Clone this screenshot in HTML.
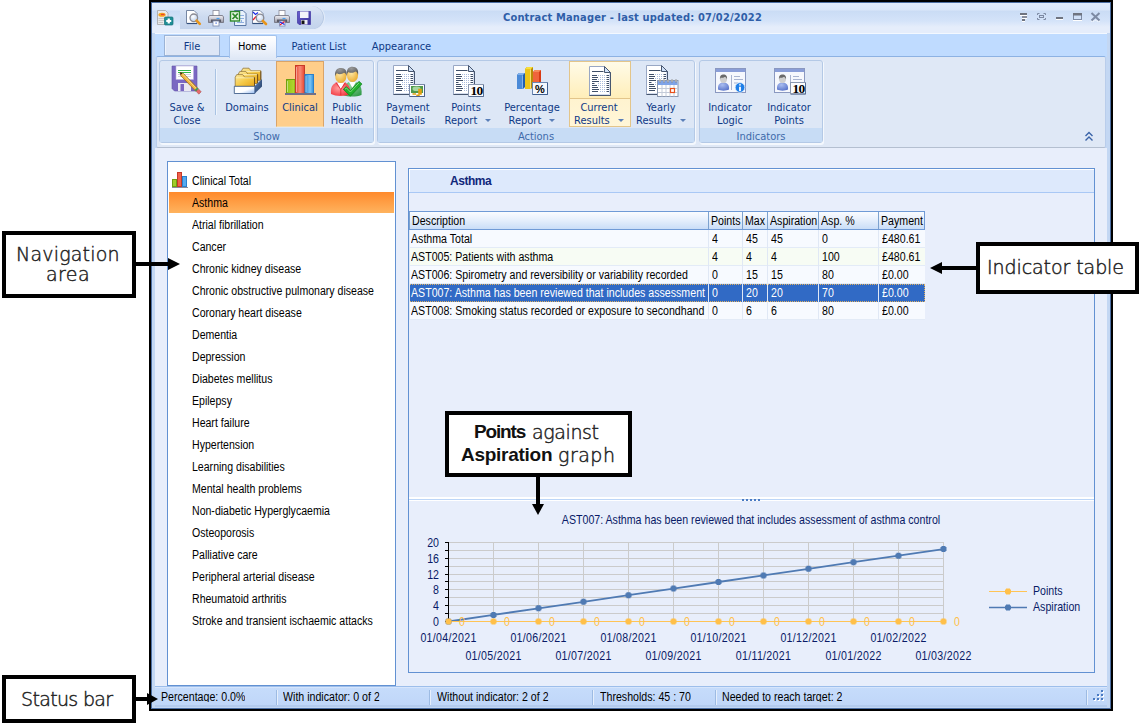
<!DOCTYPE html>
<html lang="en">
<head>
<meta charset="utf-8">
<title>Contract Manager</title>
<style>
html,body{margin:0;padding:0;background:#fff;}
body{width:1140px;height:725px;position:relative;overflow:hidden;font-family:"Liberation Sans",sans-serif;font-size:11px;color:#000;}
.abs{position:absolute;}
#win{position:absolute;left:149px;top:0;width:964px;height:711px;background:#000;}
#frame{position:absolute;left:2px;top:2px;right:2px;bottom:2px;background:#c3d7f3;border:1px solid #4d6fa3;box-sizing:border-box;}
#title{position:absolute;left:152px;top:3px;width:958px;height:30px;background:linear-gradient(#e2ecfb 0,#dbe7f9 7px,#cadcf5 8px,#d4e3f9 18px,#e5edfb 24px,#e5edfb 100%);}
#tabs{position:absolute;left:155px;top:33px;width:952px;height:24px;background:#bfdbff;border-top:1px solid #f3f8ff;box-sizing:border-box;}
#ribbon{position:absolute;left:156px;top:56px;width:950px;height:92px;background:#dfe8f6;border:1px solid #b9cdeb;border-top-color:#8db2e3;border-bottom-color:#b4bfd0;border-radius:2px;box-sizing:border-box;}
#content{position:absolute;left:155px;top:148px;width:952px;height:538px;background:#e8eefb;}
.tahoma{font-family:"DejaVu Sans Condensed","Liberation Sans",sans-serif;font-size:11px;color:#0e3986;}
.tab{position:absolute;top:36px;height:21px;line-height:21px;text-align:center;}
.grp{position:absolute;top:60px;height:83px;background:#dde7f6;border:1px solid #b4c9e6;border-radius:3px;box-sizing:border-box;box-shadow:1px 1px 0 #f4f8fd,1px 2px 0 #f4f8fd;}
.grp .lab{position:absolute;left:0;right:0;bottom:0;height:14px;line-height:17px;background:#c7dcf5;text-align:center;color:#3e6aaa;}
.btn{position:absolute;top:101px;line-height:13px;text-align:center;white-space:nowrap;}
.callout{position:absolute;border:4px solid #000;background:#fff;box-sizing:border-box;}
.ct{position:absolute;height:22px;line-height:22px;white-space:nowrap;font-family:"DejaVu Sans","Liberation Sans",sans-serif;font-weight:200;font-size:19px;color:#222;-webkit-text-stroke:0.45px #222;}
.ct.cb{font-family:"Liberation Sans",sans-serif;font-weight:bold;-webkit-text-stroke:0;color:#111;}
.nav{position:absolute;left:192px;height:22px;line-height:22px;white-space:nowrap;font-size:12px;transform:scaleX(0.88);transform-origin:0 50%;}
.th{position:absolute;top:212px;height:17px;line-height:19px;padding-left:2px;box-sizing:border-box;border-left:1px solid #7da2ce;white-space:nowrap;overflow:hidden;font-size:12px;}
.tr{position:absolute;left:409px;width:516px;height:18px;background:#f7faff;border-bottom:1px solid #e3ebf7;box-sizing:border-box;}
.tr.alt{background:#f7fcf4;}
.tr.sel{background:#316ac5;border:1px dotted #e0b060;}
.td{position:absolute;height:18px;line-height:19px;padding-left:1px;box-sizing:border-box;border-left:1px solid #e0e8f5;white-space:nowrap;overflow:hidden;font-size:12px;}
.td.w{color:#fff;}
.st{position:absolute;top:688px;height:14px;overflow:hidden;line-height:18px;white-space:nowrap;font-size:12px;transform:scaleX(0.885);transform-origin:0 50%;}
.sep{position:absolute;top:690px;width:1px;height:15px;background:#9dbbe3;border-right:1px solid #e6effc;}
.dd{display:inline-block;width:0;height:0;border-left:3px solid transparent;border-right:3px solid transparent;border-top:3px solid #5a7fb8;margin-left:5px;vertical-align:2px;}
.sx{display:inline-block;transform:scaleX(0.885);transform-origin:0 50%;}
</style>
</head>
<body>
<div id="win"><div id="frame"></div></div>
<div id="title"></div>
<div id="tabs"></div>
<div id="ribbon"></div>
<div id="content"></div>

<!-- title text -->
<div class="abs" style="left:503px;top:10px;width:260px;height:16px;line-height:16px;font-family:'DejaVu Sans Condensed','Liberation Sans',sans-serif;font-weight:bold;font-size:11px;color:#2f5ea8;letter-spacing:0.17px;white-space:nowrap;">Contract Manager - last updated: 07/02/2022</div>

<!-- quick access toolbar + window buttons -->
<div class="abs" style="left:180px;top:5px;width:145px;height:25px;background:linear-gradient(#dfe8f6,#cddbf0 45%,#c3d3ec);border-radius:0 13px 13px 0;border:1px solid #e3ecf9;border-left:none;box-sizing:border-box;box-shadow:inset -1px 0 0 #b4c7e3;"></div>
<svg class="abs" style="left:150px;top:0;" width="962" height="34" viewBox="150 0 962 34">
<defs>
<linearGradient id="gPrn" x1="0" y1="0" x2="0" y2="1"><stop offset="0" stop-color="#f0f0f5"/><stop offset="0.55" stop-color="#c2c2cc"/><stop offset="1" stop-color="#8e8e9a"/></linearGradient>
<radialGradient id="gLens" cx="0.4" cy="0.35" r="0.7"><stop offset="0" stop-color="#ffffff"/><stop offset="1" stop-color="#b9cdea"/></radialGradient>
<linearGradient id="gFlop" x1="0" y1="0" x2="1" y2="1"><stop offset="0" stop-color="#6a5fd0"/><stop offset="1" stop-color="#3a3296"/></linearGradient>
<g id="printer">
<rect x="5" y="0.5" width="6" height="6" fill="#fff" stroke="#8a8a98" stroke-width="0.8"/>
<path d="M1.5 5.500H14.500L15.500 7V12.500H0.500V7Z" fill="url(#gPrn)" stroke="#6d6d7a" stroke-width="0.8"/>
<path d="M3 12V9.500H13V12" fill="#5a5a66"/>
<path d="M8.500 8.500H11.500" stroke="#4aa0f0" stroke-width="1.2"/>
</g>
<g id="mag">
<circle cx="0" cy="0" r="3.800" fill="url(#gLens)" stroke="#8a8a92" stroke-width="1.3"/>
<path d="M2.800 2.800L6 6" stroke="#e8951a" stroke-width="2.600" stroke-linecap="round"/>
</g>
</defs>
<!-- app icon -->
<path d="M157.500 10.500H165.500L168 13V24.500H157.500Z" fill="#e9e9e9" stroke="#a3a3a3" stroke-width="0.8"/>
<ellipse cx="162" cy="14.800" rx="3.600" ry="2" fill="#f7a51a"/>
<path d="M161 14.500h3.500" stroke="#e8452f" stroke-width="1.300"/>
<path d="M158.500 18.500H166M158.500 20.500H166M158.500 22.500H163" stroke="#c3c3c3" stroke-width="0.9"/>
<rect x="164.500" y="17" width="8.500" height="8" rx="1" fill="#1f8f96" stroke="#167078" stroke-width="0.7"/>
<path d="M168.750 18.500V23.500M166.250 21H171.250" stroke="#fff" stroke-width="2.200"/>
<!-- print preview -->
<path d="M186.500 10.500H194L197 13.500V23.500H186.500Z" fill="#fff" stroke="#6a7a98" stroke-width="0.9"/>
<path d="M187 23.500H197" stroke="#33507f" stroke-width="1.200"/>
<use href="#mag" x="193.800" y="17.800"/>
<!-- print -->
<use href="#printer" x="208" y="10"/>
<rect x="213" y="21" width="6" height="5" fill="#fff" stroke="#7a8ab0" stroke-width="0.8"/>
<rect x="215.500" y="22.500" width="1.200" height="1.200" fill="#2a5ad8"/>
<!-- excel -->
<path d="M234.500 10.500H243L246 13.500V25.500H234.500Z" fill="#e9f1fd" stroke="#4a6a9a" stroke-width="0.9"/>
<path d="M240 15.500H244M240 18.500H244M237 22.500H244M241.500 20V23" stroke="#8fb0e0" stroke-width="1"/>
<rect x="230.500" y="11.500" width="9" height="9.500" fill="#eaf5e6" stroke="#2f8a2a" stroke-width="1.400"/>
<path d="M232.500 13.500L237.800 19M237.800 13.500L232.500 19" stroke="#2f8a2a" stroke-width="1.800"/>
<!-- chart preview -->
<path d="M252.500 10.500H260L263 13.500V23.500H252.500Z" fill="#fff" stroke="#6a7a98" stroke-width="0.9"/>
<path d="M252.500 23.500H263" stroke="#33507f" stroke-width="1.200"/>
<path d="M253 12L255.500 14.500L258 12.500" stroke="#1a2ae8" stroke-width="1.200" fill="none"/>
<path d="M253 20L256 16.500" stroke="#e81a2a" stroke-width="1.200" fill="none"/>
<use href="#mag" x="260" y="18"/>
<!-- print chart -->
<use href="#printer" x="274" y="10"/>
<rect x="279.500" y="21" width="5.500" height="5" fill="#fff" stroke="#7a8ab0" stroke-width="0.8"/>
<path d="M280 25L284.500 21.500" stroke="#e81a2a" stroke-width="1.200"/>
<path d="M280 22L284.500 24.500" stroke="#1a2ae8" stroke-width="1.200"/>
<!-- save -->
<path d="M297.500 11.500H310.500V24.500H299L297.500 23Z" fill="url(#gFlop)" stroke="#4a40a8" stroke-width="0.8"/>
<rect x="300" y="11.500" width="8.500" height="6.500" fill="#f4f4fb"/>
<rect x="301" y="20" width="6.500" height="4.500" fill="#eeeef4"/>
<rect x="301.500" y="20.500" width="3" height="3.500" fill="#141414"/>
<!-- window buttons -->
<g fill="#fff">
<rect x="1020" y="14" width="7" height="2"/><rect x="1022" y="17" width="5" height="2"/><rect x="1022" y="20" width="3" height="2"/>
<rect x="1056" y="18" width="7" height="2"/>
<rect x="1073" y="19" width="9" height="2"/>
<path d="M1091 21.500h3l1.500-2 1.500 2h3v-1h-9z"/>
</g>
<g fill="#6f7480">
<rect x="1020" y="13" width="7" height="2"/><rect x="1022" y="16" width="5" height="2" fill="#8a909e"/><rect x="1022" y="19" width="3" height="2"/>
<rect x="1056" y="17" width="7" height="2"/>
</g>
<path d="M1037.500 15V13.500H1039.500M1043.500 13.500H1045.500V15M1045.500 18V19.500H1043.500M1039.500 19.500H1037.500V18" stroke="#7d8aa3" stroke-width="1" fill="none"/>
<rect x="1039.500" y="15.500" width="4" height="2" fill="none" stroke="#7d8aa3"/>
<rect x="1073.500" y="13.500" width="8" height="6" fill="none" stroke="#7d8aa3"/>
<rect x="1073" y="13" width="9" height="2.500" fill="#6f7480"/>
<path d="M1091.500 13L1099.500 20.500M1099.500 13L1091.500 20.500" stroke="#7d8aa3" stroke-width="2" fill="none"/>
</svg>
<!-- ribbon collapse chevron -->
<svg class="abs" style="left:1084px;top:131px;" width="10" height="11" viewBox="0 0 10 11"><path d="M1.500 5L5 1.500L8.500 5M1.500 9.500L5 6L8.500 9.500" stroke="#3a63a8" stroke-width="1.400" fill="none"/></svg>
<!-- ribbon tabs -->
<div class="abs" style="left:164px;top:35px;width:56px;height:21px;background:#dde6f6;border:1px solid #9bb3d6;box-sizing:border-box;box-shadow:inset 1px 1px 0 #eef3fb;"></div>
<div class="abs" style="left:229px;top:35px;width:48px;height:23px;background:linear-gradient(#ffffff,#f4f7fd 40%,#e0e9f7);border:1px solid #a3c2ec;border-bottom:none;border-radius:2px 2px 0 0;box-sizing:border-box;"></div>
<div class="tab tahoma" style="left:164px;width:56px;">File</div>
<div class="tab tahoma" style="left:228px;width:48px;color:#000;letter-spacing:-0.3px;">Home</div>
<div class="tab tahoma" style="left:284px;width:70px;">Patient List</div>
<div class="tab tahoma" style="left:364px;width:75px;">Appearance</div>
<!-- ribbon groups -->
<div class="grp tahoma" style="left:159px;width:215px;"><div class="lab">Show</div></div>
<div class="grp tahoma" style="left:377px;width:318px;"><div class="lab">Actions</div></div>
<div class="grp tahoma" style="left:699px;width:124px;"><div class="lab">Indicators</div></div>
<div class="abs" style="left:215px;top:69px;width:1px;height:46px;background:#a9c3e3;border-right:1px solid #eef4fc;"></div>
<!-- highlighted buttons -->
<div class="abs" style="left:276px;top:61px;width:48px;height:66px;background:#ffce8a;border:1px solid #d9a469;border-bottom-color:#f5dcae;box-sizing:border-box;"></div>
<div class="abs" style="left:569px;top:61px;width:62px;height:66px;background:linear-gradient(#fffbe8 0,#ffeeb9 36px,#fff3cf 37px,#fff6d8 100%);border:1px solid #e3c58a;box-sizing:border-box;"></div>
<div class="abs" style="left:570px;top:98px;width:60px;height:1px;background:#e3c58a;"></div>
<!-- button labels -->
<div class="btn tahoma" style="left:157px;width:60px;">Save &amp;<br>Close</div>
<div class="btn tahoma" style="left:217px;width:60px;">Domains</div>
<div class="btn tahoma" style="left:270px;width:60px;">Clinical</div>
<div class="btn tahoma" style="left:317px;width:60px;">Public<br>Health</div>
<div class="btn tahoma" style="left:373px;width:70px;">Payment<br>Details</div>
<div class="btn tahoma" style="left:433px;width:70px;"><span style="position:relative;left:-2px;">Points</span><br>Report <i class="dd"></i></div>
<div class="btn tahoma" style="left:497px;width:70px;">Percentage<br>Report <i class="dd"></i></div>
<div class="btn tahoma" style="left:564px;width:70px;">Current<br>Results <i class="dd"></i></div>
<div class="btn tahoma" style="left:626px;width:70px;">Yearly<br>Results <i class="dd"></i></div>
<div class="btn tahoma" style="left:695px;width:70px;">Indicator<br>Logic</div>
<div class="btn tahoma" style="left:754px;width:70px;">Indicator<br>Points</div>
<!-- ribbon icons -->
<svg class="abs" style="left:0;top:0;" width="1140" height="150" viewBox="0 0 1140 150">
<defs>
<g id="doc">
<path d="M0.5 0.5H15.5L21.5 6.5V29.5H0.5Z" fill="#fff" stroke="#98a7c4"/>
<path d="M1.5 28.500H20.500V7" fill="none" stroke="#d3dcee"/>
<path d="M0.500 29.500H21.500V6.500" fill="none" stroke="#46566f"/>
<path d="M15.500 0.500V6.500H21.500Z" fill="#cfe0f8" stroke="#46566f" stroke-linejoin="round"/>
<path d="M3 5.500h11.500 M3 9.5h5 M17.5 9.5h2.5 M3 11.5h6 M17.5 11.5h2.5 M3 13.5h5 M17.5 13.5h2.5 M3 15.5h7 M17.5 15.5h2.5 M3 17.5h2.5 M17.5 17.5h2.5 M3 19.5h5 M17.5 19.5h2.5 M3 21.5h6 M17.5 21.5h2.5 M3 23.5h7 M17.5 23.5h2.5 M3 25.5h6 M17.5 25.5h2.5" stroke="#3f4f68" stroke-width="1" fill="none"/>
<path d="M9.0 9.5h1 M11.0 9.5h1 M13.0 9.5h1 M15.0 9.5h1 M11.0 11.5h1 M13.0 11.5h1 M15.0 11.5h1 M9.0 13.5h1 M11.0 13.5h1 M13.0 13.5h1 M15.0 13.5h1 M11.0 15.5h1 M13.0 15.5h1 M15.0 15.5h1 M9.0 17.5h1 M11.0 17.5h1 M13.0 17.5h1 M15.0 17.5h1 M9.0 19.5h1 M11.0 19.5h1 M13.0 19.5h1 M15.0 19.5h1 M11.0 21.5h1 M13.0 21.5h1 M15.0 21.5h1 M11.0 23.5h1 M13.0 23.5h1 M15.0 23.5h1 M11.0 25.5h1 M13.0 25.5h1 M15.0 25.5h1" stroke="#a9bbdc" stroke-width="1" fill="none"/>
</g>
<linearGradient id="gGreen" x1="0" x2="1"><stop offset="0" stop-color="#8fc31a"/><stop offset="1" stop-color="#b6d930"/></linearGradient>
<linearGradient id="gRed" x1="0" x2="1"><stop offset="0" stop-color="#e8452f"/><stop offset="0.5" stop-color="#f58a78"/><stop offset="1" stop-color="#e8452f"/></linearGradient>
<linearGradient id="gBlue" x1="0" x2="1"><stop offset="0" stop-color="#2f8fdc"/><stop offset="0.6" stop-color="#7cc4f4"/><stop offset="1" stop-color="#2f8fdc"/></linearGradient>
<linearGradient id="gFold" x1="0" y1="0" x2="1" y2="1"><stop offset="0" stop-color="#fbe9a0"/><stop offset="0.5" stop-color="#f6cb4a"/><stop offset="1" stop-color="#e6a416"/></linearGradient><linearGradient id="gTraySide" x1="0" y1="0" x2="1" y2="1"><stop offset="0" stop-color="#5f80b6"/><stop offset="1" stop-color="#1f3a60"/></linearGradient>
<linearGradient id="gTray" x1="0" y1="0" x2="1" y2="1"><stop offset="0" stop-color="#ffffff"/><stop offset="0.55" stop-color="#ffffff"/><stop offset="1" stop-color="#8fb6ee"/></linearGradient>
<radialGradient id="gFace" cx="0.4" cy="0.35" r="0.7"><stop offset="0" stop-color="#ffe9a8"/><stop offset="1" stop-color="#e9a92a"/></radialGradient>
<radialGradient id="gBodyR" cx="0.4" cy="0.45" r="0.7"><stop offset="0" stop-color="#ffa0a0"/><stop offset="1" stop-color="#f02a34"/></radialGradient>
<radialGradient id="gBodyG" cx="0.4" cy="0.3" r="0.8"><stop offset="0" stop-color="#8fd39a"/><stop offset="1" stop-color="#2f9a48"/></radialGradient>
<radialGradient id="gBodyB" cx="0.4" cy="0.3" r="0.8"><stop offset="0" stop-color="#a9bdf0"/><stop offset="1" stop-color="#5570c8"/></radialGradient>
<radialGradient id="gHeadG" cx="0.4" cy="0.2" r="0.9"><stop offset="0" stop-color="#9a9a9a"/><stop offset="1" stop-color="#4c4c4c"/></radialGradient>
</defs>
<!-- Save & Close -->
<g>
<path d="M172 66H197V91H174.5L172 88.5Z" fill="#7a68c2" stroke="#6654aa" stroke-width="0.6"/>
<rect x="176" y="66" width="17.5" height="13.5" fill="#fff" stroke="#b9b3de" stroke-width="0.6"/>
<path d="M178 70.500H191M178 72.500H191" stroke="#2fb84a" stroke-width="1"/>
<path d="M178 74.500H191M178 76.500H191" stroke="#d4d4e0" stroke-width="1"/>
<rect x="178" y="83" width="13" height="8" fill="#e9e9f1"/>
<rect x="180.5" y="84" width="3.5" height="7" fill="#7a68c2"/>
<path d="M180 72.500L183.200 73.300L198.200 88.800L195.800 91.200L180.800 75.800Z" fill="#f0b43c" stroke="#8a5a1c" stroke-width="0.7"/>
<path d="M182.500 73.800L197.300 89.600" stroke="#fbe08a" stroke-width="0.9"/>
<path d="M180 72.500L182.200 73.100L180.900 74.900Z" fill="#2a1a0a"/>
<path d="M195.200 90.600L197.800 88.200" stroke="#3a9a5a" stroke-width="1.600"/>
<path d="M196.300 91.400L198.700 89.100L201.200 91.800L198.800 94.200Z" fill="#e86a6a" stroke="#9a4a4a" stroke-width="0.5"/>
</g>
<!-- Domains -->
<g>
<path d="M241.5 80.3V70.8L243.0 68.2H249.0L251.0 70.8H260.8V80.3Z" fill="url(#gFold)" stroke="#8a6a2a" stroke-width="0.7"/><path d="M242.5 71.39999999999999H260.1" stroke="#fdf3c0" stroke-width="0.8"/><path d="M260.8 71.3V79.8" stroke="#6a4a1a" stroke-width="0.9"/>
<path d="M238.3 83.5V74L239.8 71.4H245.8L247.8 74H257.6V83.5Z" fill="url(#gFold)" stroke="#8a6a2a" stroke-width="0.7"/><path d="M239.3 74.6H256.90000000000003" stroke="#fdf3c0" stroke-width="0.8"/><path d="M257.6 74.5V83" stroke="#6a4a1a" stroke-width="0.9"/>
<path d="M235.2 86.7V77.2L236.7 74.60000000000001H242.7L244.7 77.2H254.5V86.7Z" fill="url(#gFold)" stroke="#8a6a2a" stroke-width="0.7"/><path d="M236.2 77.8H253.79999999999998" stroke="#fdf3c0" stroke-width="0.8"/><path d="M254.5 77.7V86.2" stroke="#6a4a1a" stroke-width="0.9"/>
<path d="M254.800 86L262 79V86.500L254.800 93.500Z" fill="url(#gTraySide)"/>
<path d="M234.300 86.300H254.800V93.500H234.300Z" fill="url(#gTray)" stroke="#2f4f7f" stroke-width="0.8"/>
</g>
<!-- Clinical -->
<g>
<rect x="286.5" y="79.5" width="8.5" height="14" fill="url(#gGreen)" stroke="#6f9f10"/>
<rect x="295.5" y="65.5" width="9" height="28" fill="url(#gRed)" stroke="#c83a28"/>
<rect x="305" y="74.5" width="8.5" height="19" fill="url(#gBlue)" stroke="#2a80cc"/>
<path d="M296.5 67V92M306 76V92M287.5 81V92" stroke="#fff" stroke-opacity="0.45" stroke-width="1"/>
<rect x="285" y="93" width="31" height="2" fill="#70708a"/>
</g>
<!-- Public Health -->
<g>
<path d="M343 95C342 85 347 81.500 352 81.500C358 81.500 362.500 85 361.500 95C356 97 348 97 343 95Z" fill="url(#gBodyG)"/>
<path d="M349 82L352.500 88L356 82Z" fill="#fff"/>
<ellipse cx="352.500" cy="74.800" rx="5.600" ry="7.300" fill="url(#gFace)"/>
<path d="M347 75C346 69 349 66.800 352.500 66.800C356.500 66.800 359 69.500 358 75C357.500 72.500 356.500 71.800 355.500 71.500C353.500 73.200 350 73.200 348.500 72C347.500 72.800 347.200 73.800 347 75Z" fill="url(#gHeadG)"/>
<path d="M331 94C330 85 334.500 82 340.500 82C346.500 82 351 85.500 350 94C345 96.500 336 96.500 331 94Z" fill="url(#gBodyR)"/>
<path d="M337 82.500L340.800 89L344.500 82.500Z" fill="#fff"/>
<path d="M336 82.500L340.800 89.500L345.500 82.500M340.800 89.500V95" stroke="#e02030" stroke-width="0.8" fill="none"/>
<ellipse cx="340.800" cy="75.800" rx="5.700" ry="7.200" fill="url(#gFace)"/>
<path d="M335.200 76.500C334.200 70.500 337.200 68 341 68C345.200 68 347.500 70.800 346.500 76C346 73.800 345 73 344 72.800C342 74.500 338.500 74.500 337 73.300C336 74 335.500 75 335.200 76.500Z" fill="url(#gHeadG)"/>
<path d="M343.300 89.300L346.300 86.600L350.300 90.600L359 81.300L362 84.100L350.400 96.200Z" fill="#22b02e" stroke="#0f7f1e" stroke-width="0.7"/>
<path d="M345 89.200L346.500 88L350.400 92L359 82.900" stroke="#8fe88a" stroke-width="0.8" fill="none"/>
</g>
<!-- Payment Details -->
<use href="#doc" x="393" y="65"/>
<g>
<rect x="409.500" y="84.500" width="15" height="12" fill="#fbfcfe" stroke="#7a8aa8"/>
<path d="M410 96.500H424.500V85" stroke="#4f628a" fill="none"/>
<rect x="411" y="86" width="12" height="7" fill="#4f9a4a"/>
<ellipse cx="416.500" cy="88.800" rx="4" ry="2.300" fill="#a6d6a0"/>
<path d="M418.200 89.500h3.600M418.200 91h3.600M418.200 92.500h3.600M418.200 94h3.600" stroke="#e0a010" stroke-width="1.300"/>
<path d="M412.500 94h3.500M416.300 95.200h3.400" stroke="#e0a010" stroke-width="1.500"/>
</g>
<!-- Points Report -->
<use href="#doc" x="453" y="65"/>
<rect x="468.500" y="84.500" width="15" height="12" fill="#fbfcfe" stroke="#8a98b0"/><path d="M469 96.500H483.500V85" stroke="#5a6f94" fill="none"/>
<text x="476.400" y="95.300" text-anchor="middle" font-family="Liberation Serif, serif" font-weight="bold" font-size="13.500" fill="#000" letter-spacing="-0.9">10</text>
<!-- Percentage Report -->
<g>
<path d="M517 75L519 73H525V87L523 89H517Z" fill="#1f5fb0"/>
<rect x="517" y="75" width="6" height="14" fill="#4a8ad8"/>
<path d="M517 75L519 73H525L523 75Z" fill="#7fb0ec"/>
<path d="M522.500 75.500V88.500" stroke="#8fbcf0" stroke-width="0.8"/>
<path d="M533 72L535 70H541V83H533Z" fill="#d83a14"/>
<rect x="533" y="72" width="6" height="12" fill="#f0643c"/>
<path d="M533 72L535 70H541L539 72Z" fill="#f58a5a"/>
<path d="M525 69L527 67H533V87L531 89H525Z" fill="#b88a08"/>
<rect x="525" y="69" width="6" height="20" fill="#ecc41a"/>
<path d="M525 69L527 67H533L531 69Z" fill="#f8e03a"/>
<path d="M530.500 69.500V88.500" stroke="#f8e68a" stroke-width="0.8"/>
<rect x="532.500" y="82.500" width="15" height="12" fill="#f4f8fe" stroke="#6a86b0"/>
<path d="M533 94.500H547.500V83" stroke="#3f5f8f" stroke-width="1" fill="none"/>
<text x="540" y="93" text-anchor="middle" font-family="Liberation Sans, sans-serif" font-weight="bold" font-size="11" fill="#000">%</text>
</g>
<!-- Current Results -->
<use href="#doc" x="589" y="66"/>
<!-- Yearly Results -->
<use href="#doc" x="646" y="65"/>
<g>
<rect x="657.500" y="80.500" width="20.500" height="16" fill="#fff" stroke="#8a98b0"/>
<rect x="658" y="81" width="19.500" height="4" fill="#7fa4e8"/>
<path d="M658 88.500H678M658 92.500H678M662 85V96.500M666 85V96.500M670 85V96.500M674 85V96.500" stroke="#c3cbd9" stroke-width="1"/>
<rect x="670.500" y="88.500" width="4" height="4" fill="#fff" stroke="#e8501a" stroke-width="1.200"/>
<path d="M660 79.500V82.500M664 79.500V82.500M668 79.500V82.500M672 79.500V82.500M676 79.500V82.500" stroke="#8a8a8a" stroke-width="1.600"/>
<path d="M660 80V82M664 80V82M668 80V82M672 80V82M676 80V82" stroke="#f0f0f0" stroke-width="0.600"/>
</g>
<!-- Indicator Logic -->
<g id="ilogic">
<rect x="715.500" y="68.500" width="30" height="24" fill="#f6f8fd" stroke="#8a98c0"/>
<rect x="716" y="69" width="29" height="3" fill="#8a9ed8"/>
<path d="M731.500 75V90" stroke="#a9b4d0" stroke-width="1"/>
<path d="M734 76.500H740M734 79.500H743M734 83H738" stroke="#a9b4d0" stroke-width="1"/>
<path d="M718 89.500C717.500 84 720.500 82.500 723.500 82.500C727 82.500 729.500 84.500 729 89.500C726 91 721 91 718 89.500Z" fill="url(#gBodyB)"/>
<ellipse cx="723.500" cy="79" rx="3.500" ry="4" fill="#cfcfcf"/><path d="M720 79.500C719.500 75.500 721.500 74.500 723.500 74.500C726 74.500 727.500 76 727 79.500C726.500 77.500 725.500 77 724.500 77C723 78 721.500 78 720.800 77.500C720.300 78 720.100 78.700 720 79.500Z" fill="#6a6a6a"/>
</g>
<circle cx="740" cy="87.500" r="4.800" fill="#1f7fe8" stroke="#cfe4fb" stroke-width="0.800"/>
<path d="M740 84.300V85.500M740 86.800V91" stroke="#fff" stroke-width="1.800"/>
<!-- Indicator Points -->
<use href="#ilogic" x="59"/>
<rect x="790.500" y="82.500" width="15" height="11.500" fill="#fbfcfe" stroke="#8a98b0"/><path d="M791 94H805.500V83" stroke="#5a6f94" fill="none"/>
<text x="798.400" y="93" text-anchor="middle" font-family="Liberation Serif, serif" font-weight="bold" font-size="13.500" fill="#000" letter-spacing="-0.9">10</text>
</svg>
<!-- navigation panel -->
<div class="abs" style="left:167px;top:161px;width:229px;height:525px;background:#fff;border:1px solid #6291d2;box-sizing:border-box;"></div>
<div class="abs" style="left:169px;top:192px;width:225px;height:21px;background:linear-gradient(#ff8a2c,#ffb35e);"></div>
<svg class="abs" style="left:171px;top:171px;" width="18" height="18" viewBox="171 171 18 18">
<rect x="172.500" y="179.500" width="4" height="7" fill="#9fcc2a" stroke="#6f9f10"/>
<rect x="177.500" y="172.500" width="4" height="14" fill="#f0604a" stroke="#c83a28"/>
<rect x="182.500" y="176.500" width="4" height="10" fill="#55aaf0" stroke="#2a80cc"/>
<rect x="172" y="187" width="16" height="1" fill="#8a8a9a"/>
</svg>
<div class="nav" style="top:170px;">Clinical Total</div>
<div class="nav" style="top:192px;">Asthma</div>
<div class="nav" style="top:214px;">Atrial fibrillation</div>
<div class="nav" style="top:236px;">Cancer</div>
<div class="nav" style="top:258px;">Chronic kidney disease</div>
<div class="nav" style="top:280px;">Chronic obstructive pulmonary disease</div>
<div class="nav" style="top:302px;">Coronary heart disease</div>
<div class="nav" style="top:324px;">Dementia</div>
<div class="nav" style="top:346px;">Depression</div>
<div class="nav" style="top:368px;">Diabetes mellitus</div>
<div class="nav" style="top:390px;">Epilepsy</div>
<div class="nav" style="top:412px;">Heart failure</div>
<div class="nav" style="top:434px;">Hypertension</div>
<div class="nav" style="top:456px;">Learning disabilities</div>
<div class="nav" style="top:478px;">Mental health problems</div>
<div class="nav" style="top:500px;">Non-diabetic Hyperglycaemia</div>
<div class="nav" style="top:522px;">Osteoporosis</div>
<div class="nav" style="top:544px;">Palliative care</div>
<div class="nav" style="top:566px;">Peripheral arterial disease</div>
<div class="nav" style="top:588px;">Rheumatoid arthritis</div>
<div class="nav" style="top:610px;">Stroke and transient ischaemic attacks</div>
<!-- right panel -->
<div class="abs" style="left:408px;top:168px;width:687px;height:505px;border:1px solid #6291d2;box-sizing:border-box;background:#e8eefb;"></div>
<div class="abs" style="left:409px;top:169px;width:685px;height:23px;background:#dde9fc;border-bottom:1px solid #a9c8f5;box-shadow:inset 1px 1px 0 #fff;"></div>
<div class="abs" style="left:450px;top:173px;height:16px;line-height:16px;font-weight:bold;font-size:12px;letter-spacing:-0.45px;color:#10277a;">Asthma</div>
<!-- indicator table -->
<div class="abs" style="left:409px;top:211px;width:516px;height:19px;background:linear-gradient(#fafcff,#e4eefc 50%,#c9ddf7);border:1px solid #6f9ad6;box-sizing:border-box;"></div>
<div class="th" style="left:409px;width:299px;"><span class="sx">Description</span></div>
<div class="th" style="left:708px;width:34px;"><span class="sx">Points</span></div>
<div class="th" style="left:742px;width:25px;"><span class="sx">Max</span></div>
<div class="th" style="left:767px;width:51px;"><span class="sx">Aspiration</span></div>
<div class="th" style="left:818px;width:60px;"><span class="sx">Asp. %</span></div>
<div class="th" style="left:878px;width:46px;"><span class="sx">Payment</span></div>
<div class="tr" style="top:230px;"></div>
<div class="td" style="left:409px;top:230px;width:299px;"><span class="sx">Asthma Total</span></div>
<div class="td" style="left:708px;top:230px;width:34px;padding-left:3px;"><span class="sx">4</span></div>
<div class="td" style="left:742px;top:230px;width:25px;padding-left:3px;"><span class="sx">45</span></div>
<div class="td" style="left:767px;top:230px;width:51px;padding-left:3px;"><span class="sx">45</span></div>
<div class="td" style="left:818px;top:230px;width:60px;padding-left:3px;"><span class="sx">0</span></div>
<div class="td" style="left:878px;top:230px;width:46px;padding-left:3px;"><span class="sx">£480.61</span></div>
<div class="tr alt" style="top:248px;"></div>
<div class="td" style="left:409px;top:248px;width:299px;"><span class="sx">AST005: Patients with asthma</span></div>
<div class="td" style="left:708px;top:248px;width:34px;padding-left:3px;"><span class="sx">4</span></div>
<div class="td" style="left:742px;top:248px;width:25px;padding-left:3px;"><span class="sx">4</span></div>
<div class="td" style="left:767px;top:248px;width:51px;padding-left:3px;"><span class="sx">4</span></div>
<div class="td" style="left:818px;top:248px;width:60px;padding-left:3px;"><span class="sx">100</span></div>
<div class="td" style="left:878px;top:248px;width:46px;padding-left:3px;"><span class="sx">£480.61</span></div>
<div class="tr" style="top:266px;"></div>
<div class="td" style="left:409px;top:266px;width:299px;"><span class="sx">AST006: Spirometry and reversibility or variability recorded</span></div>
<div class="td" style="left:708px;top:266px;width:34px;padding-left:3px;"><span class="sx">0</span></div>
<div class="td" style="left:742px;top:266px;width:25px;padding-left:3px;"><span class="sx">15</span></div>
<div class="td" style="left:767px;top:266px;width:51px;padding-left:3px;"><span class="sx">15</span></div>
<div class="td" style="left:818px;top:266px;width:60px;padding-left:3px;"><span class="sx">80</span></div>
<div class="td" style="left:878px;top:266px;width:46px;padding-left:3px;"><span class="sx">£0.00</span></div>
<div class="tr sel" style="top:284px;"></div>
<div class="td w" style="left:409px;top:284px;width:299px;"><span class="sx">AST007: Asthma has been reviewed that includes assessment</span></div>
<div class="td w" style="left:708px;top:284px;width:34px;padding-left:3px;"><span class="sx">0</span></div>
<div class="td w" style="left:742px;top:284px;width:25px;padding-left:3px;"><span class="sx">20</span></div>
<div class="td w" style="left:767px;top:284px;width:51px;padding-left:3px;"><span class="sx">20</span></div>
<div class="td w" style="left:818px;top:284px;width:60px;padding-left:3px;"><span class="sx">70</span></div>
<div class="td w" style="left:878px;top:284px;width:46px;padding-left:3px;"><span class="sx">£0.00</span></div>
<div class="tr" style="top:302px;"></div>
<div class="td" style="left:409px;top:302px;width:299px;"><span class="sx">AST008: Smoking status recorded or exposure to secondhand</span></div>
<div class="td" style="left:708px;top:302px;width:34px;padding-left:3px;"><span class="sx">0</span></div>
<div class="td" style="left:742px;top:302px;width:25px;padding-left:3px;"><span class="sx">6</span></div>
<div class="td" style="left:767px;top:302px;width:51px;padding-left:3px;"><span class="sx">6</span></div>
<div class="td" style="left:818px;top:302px;width:60px;padding-left:3px;"><span class="sx">80</span></div>
<div class="td" style="left:878px;top:302px;width:46px;padding-left:3px;"><span class="sx">£0.00</span></div>
<!-- chart -->
<svg class="abs" style="left:409px;top:502px;" width="685" height="170" viewBox="409 502 685 170" font-family="Liberation Sans, sans-serif" font-size="12" fill="#081a66">
<path d="M449 621.5H944 M449 613.5H944 M449 605.5H944 M449 597.5H944 M449 589.5H944 M449 581.5H944 M449 574.5H944 M449 566.5H944 M449 558.5H944 M449 550.5H944 M449 542.5H944 M493.5 542V622 M538.5 542V622 M583.5 542V622 M628.5 542V622 M673.5 542V622 M718.5 542V622 M763.5 542V622 M808.5 542V622 M853.5 542V622 M898.5 542V622 M943.5 542V622" stroke="#cbcbcb" stroke-width="1" fill="none"/>
<path d="M448.5 542V622 M445 621.5H448 M445 613.5H448 M445 605.5H448 M445 597.5H448 M445 589.5H448 M445 581.5H448 M445 574.5H448 M445 566.5H448 M445 558.5H448 M445 550.5H448 M445 542.5H448" stroke="#000" stroke-width="1" fill="none"/>
<text transform="translate(439 625.5) scale(0.885 1)" text-anchor="end">0</text>
<text transform="translate(439 609.5) scale(0.885 1)" text-anchor="end">4</text>
<text transform="translate(439 593.5) scale(0.885 1)" text-anchor="end">8</text>
<text transform="translate(439 578.5) scale(0.885 1)" text-anchor="end">12</text>
<text transform="translate(439 562.5) scale(0.885 1)" text-anchor="end">16</text>
<text transform="translate(439 546.5) scale(0.885 1)" text-anchor="end">20</text>
<polyline points="448.5,621.5 493.5,614.9 538.5,608.3 583.5,601.8 628.5,595.2 673.5,588.6 718.5,582.0 763.5,575.4 808.5,568.8 853.5,562.2 898.5,555.7 943.5,549.1" stroke="#4f7ab3" stroke-width="1.8" fill="none"/>
<path d="M448 621.5H944" stroke="#ffc455" stroke-width="1" fill="none"/>
<path d="M446.5 618.5h4v1h1v4h-1v1h-4v-1h-1v-4h1z" fill="#4f7ab3"/>
<path d="M491.5 611.9h4v1h1v4h-1v1h-4v-1h-1v-4h1z" fill="#4f7ab3"/>
<path d="M536.5 605.3h4v1h1v4h-1v1h-4v-1h-1v-4h1z" fill="#4f7ab3"/>
<path d="M581.5 598.8h4v1h1v4h-1v1h-4v-1h-1v-4h1z" fill="#4f7ab3"/>
<path d="M626.5 592.2h4v1h1v4h-1v1h-4v-1h-1v-4h1z" fill="#4f7ab3"/>
<path d="M671.5 585.6h4v1h1v4h-1v1h-4v-1h-1v-4h1z" fill="#4f7ab3"/>
<path d="M716.5 579.0h4v1h1v4h-1v1h-4v-1h-1v-4h1z" fill="#4f7ab3"/>
<path d="M761.5 572.4h4v1h1v4h-1v1h-4v-1h-1v-4h1z" fill="#4f7ab3"/>
<path d="M806.5 565.8h4v1h1v4h-1v1h-4v-1h-1v-4h1z" fill="#4f7ab3"/>
<path d="M851.5 559.2h4v1h1v4h-1v1h-4v-1h-1v-4h1z" fill="#4f7ab3"/>
<path d="M896.5 552.7h4v1h1v4h-1v1h-4v-1h-1v-4h1z" fill="#4f7ab3"/>
<path d="M941.5 546.1h4v1h1v4h-1v1h-4v-1h-1v-4h1z" fill="#4f7ab3"/>
<path d="M446.5 618.5h4v1h1v4h-1v1h-4v-1h-1v-4h1z" fill="#ffc04a"/>
<text transform="translate(459 625.5) scale(0.885 1)" fill="#ffc04a">0</text>
<path d="M491.5 618.5h4v1h1v4h-1v1h-4v-1h-1v-4h1z" fill="#ffc04a"/>
<text transform="translate(504 625.5) scale(0.885 1)" fill="#ffc04a">0</text>
<path d="M536.5 618.5h4v1h1v4h-1v1h-4v-1h-1v-4h1z" fill="#ffc04a"/>
<text transform="translate(549 625.5) scale(0.885 1)" fill="#ffc04a">0</text>
<path d="M581.5 618.5h4v1h1v4h-1v1h-4v-1h-1v-4h1z" fill="#ffc04a"/>
<text transform="translate(594 625.5) scale(0.885 1)" fill="#ffc04a">0</text>
<path d="M626.5 618.5h4v1h1v4h-1v1h-4v-1h-1v-4h1z" fill="#ffc04a"/>
<text transform="translate(639 625.5) scale(0.885 1)" fill="#ffc04a">0</text>
<path d="M671.5 618.5h4v1h1v4h-1v1h-4v-1h-1v-4h1z" fill="#ffc04a"/>
<text transform="translate(684 625.5) scale(0.885 1)" fill="#ffc04a">0</text>
<path d="M716.5 618.5h4v1h1v4h-1v1h-4v-1h-1v-4h1z" fill="#ffc04a"/>
<text transform="translate(729 625.5) scale(0.885 1)" fill="#ffc04a">0</text>
<path d="M761.5 618.5h4v1h1v4h-1v1h-4v-1h-1v-4h1z" fill="#ffc04a"/>
<text transform="translate(774 625.5) scale(0.885 1)" fill="#ffc04a">0</text>
<path d="M806.5 618.5h4v1h1v4h-1v1h-4v-1h-1v-4h1z" fill="#ffc04a"/>
<text transform="translate(819 625.5) scale(0.885 1)" fill="#ffc04a">0</text>
<path d="M851.5 618.5h4v1h1v4h-1v1h-4v-1h-1v-4h1z" fill="#ffc04a"/>
<text transform="translate(864 625.5) scale(0.885 1)" fill="#ffc04a">0</text>
<path d="M896.5 618.5h4v1h1v4h-1v1h-4v-1h-1v-4h1z" fill="#ffc04a"/>
<text transform="translate(909 625.5) scale(0.885 1)" fill="#ffc04a">0</text>
<path d="M941.5 618.5h4v1h1v4h-1v1h-4v-1h-1v-4h1z" fill="#ffc04a"/>
<text transform="translate(954 625.5) scale(0.885 1)" fill="#ffc04a">0</text>
<text transform="translate(448.5 642) scale(0.885 1)" text-anchor="middle" letter-spacing="0.35">01/04/2021</text>
<text transform="translate(493.5 659.5) scale(0.885 1)" text-anchor="middle" letter-spacing="0.35">01/05/2021</text>
<text transform="translate(538.5 642) scale(0.885 1)" text-anchor="middle" letter-spacing="0.35">01/06/2021</text>
<text transform="translate(583.5 659.5) scale(0.885 1)" text-anchor="middle" letter-spacing="0.35">01/07/2021</text>
<text transform="translate(628.5 642) scale(0.885 1)" text-anchor="middle" letter-spacing="0.35">01/08/2021</text>
<text transform="translate(673.5 659.5) scale(0.885 1)" text-anchor="middle" letter-spacing="0.35">01/09/2021</text>
<text transform="translate(718.5 642) scale(0.885 1)" text-anchor="middle" letter-spacing="0.35">01/10/2021</text>
<text transform="translate(763.5 659.5) scale(0.885 1)" text-anchor="middle" letter-spacing="0.35">01/11/2021</text>
<text transform="translate(808.5 642) scale(0.885 1)" text-anchor="middle" letter-spacing="0.35">01/12/2021</text>
<text transform="translate(853.5 659.5) scale(0.885 1)" text-anchor="middle" letter-spacing="0.35">01/01/2022</text>
<text transform="translate(898.5 642) scale(0.885 1)" text-anchor="middle" letter-spacing="0.35">01/02/2022</text>
<text transform="translate(943.5 659.5) scale(0.885 1)" text-anchor="middle" letter-spacing="0.35">01/03/2022</text>
<text transform="translate(751 523.5) scale(0.885 1)" text-anchor="middle">AST007: Asthma has been reviewed that includes assessment of asthma control</text>
<path d="M989 591.5H1027" stroke="#ffc455" stroke-width="1"/><path d="M1006.0 588.5h4v1h1v4h-1v1h-4v-1h-1v-4h1z" fill="#ffc04a"/>
<path d="M989 607.5H1027" stroke="#4f7ab3" stroke-width="1.5"/><path d="M1006.0 604.5h4v1h1v4h-1v1h-4v-1h-1v-4h1z" fill="#4f7ab3"/>
<text transform="translate(1033 595) scale(0.885 1)">Points</text><text transform="translate(1033 611) scale(0.885 1)">Aspiration</text>
</svg>
<!-- splitter -->
<div class="abs" style="left:409px;top:497px;width:685px;height:2px;background:#fff;"></div>
<div class="abs" style="left:409px;top:499px;width:685px;height:1px;background:#bcd6f8;"></div>
<div class="abs" style="left:409px;top:500px;width:685px;height:1px;background:#fff;"></div>
<div class="abs" style="left:742px;top:499px;width:18px;height:2px;background:repeating-linear-gradient(90deg,#4a7ac2 0,#4a7ac2 2px,transparent 2px,transparent 4px);"></div>
<!-- status bar -->
<div class="abs" id="status" style="left:155px;top:686px;width:952px;height:21px;background:linear-gradient(#c6dcfb,#bfd6f8);border-top:1px solid #9dbeeb;box-sizing:border-box;box-shadow:inset 0 1px 0 #d6e5fc,inset 0 -2px 0 #b3cbee;"></div>
<div class="st" style="left:161px;">Percentage: 0.0%</div>
<div class="st" style="left:283px;">With indicator: 0 of 2</div>
<div class="st" style="left:437px;">Without indicator: 2 of 2</div>
<div class="st" style="left:600px;">Thresholds: 45 : 70</div>
<div class="st" style="left:722px;">Needed to reach target: 2</div>
<div class="sep" style="left:276px;"></div><div class="sep" style="left:429px;"></div><div class="sep" style="left:592px;"></div><div class="sep" style="left:715px;"></div><div class="sep" style="left:1086px;"></div>
<svg class="abs" style="left:1090px;top:688px;" width="16" height="16" viewBox="1090 688 16 16"><path d="M1102 691h2v2h-2z M1098 695h2v2h-2z M1102 695h2v2h-2z M1094 699h2v2h-2z M1098 699h2v2h-2z M1102 699h2v2h-2z" fill="#fff"/><path d="M1101 690h2v2h-2z M1097 694h2v2h-2z M1101 694h2v2h-2z M1093 698h2v2h-2z M1097 698h2v2h-2z M1101 698h2v2h-2z" fill="#4a7ac2"/></svg>
<!-- callouts -->
<div class="callout" style="left:2px;top:231px;width:134px;height:67px;"></div>
<div class="ct" style="left:16px;top:243px;letter-spacing:0.2px;">Navigation</div>
<div class="ct" style="left:46px;top:263px;letter-spacing:0.4px;">area</div>
<div class="abs" style="left:136px;top:262px;width:34px;height:4px;background:#000;"></div>
<div class="abs" style="left:168px;top:258px;width:0;height:0;border-left:12px solid #000;border-top:6px solid transparent;border-bottom:6px solid transparent;"></div>
<div class="callout" style="left:2px;top:675px;width:134px;height:48px;"></div>
<div class="ct" style="left:21px;top:688px;letter-spacing:-0.66px;">Status bar</div>
<div class="abs" style="left:136px;top:697px;width:12px;height:4px;background:#000;"></div>
<div class="abs" style="left:147px;top:693px;width:0;height:0;border-left:11px solid #000;border-top:6px solid transparent;border-bottom:6px solid transparent;"></div>
<div class="callout" style="left:976px;top:242px;width:163px;height:52px;"></div>
<div class="ct" style="left:987px;top:256px;letter-spacing:-0.08px;">Indicator table</div>
<div class="abs" style="left:940px;top:266px;width:36px;height:4px;background:#000;"></div>
<div class="abs" style="left:930px;top:262px;width:0;height:0;border-right:12px solid #000;border-top:6px solid transparent;border-bottom:6px solid transparent;"></div>
<div class="callout" style="left:445px;top:411px;width:187px;height:66px;"></div>
<div class="ct cb" style="left:474px;top:421px;letter-spacing:-1.15px;">Points</div>
<div class="ct" style="left:532px;top:421px;letter-spacing:-0.39px;">against</div>
<div class="ct cb" style="left:461px;top:444px;letter-spacing:-0.27px;">Aspiration</div>
<div class="ct" style="left:558px;top:444px;letter-spacing:0.5px;">graph</div>
<div class="abs" style="left:536px;top:477px;width:4px;height:29px;background:#000;"></div>
<div class="abs" style="left:532px;top:504px;width:0;height:0;border-top:11px solid #000;border-left:6px solid transparent;border-right:6px solid transparent;"></div>
</body>
</html>
